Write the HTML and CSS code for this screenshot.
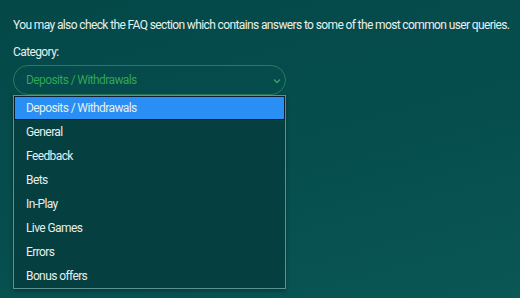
FILE: index.html
```html
<!DOCTYPE html>
<html>
<head>
    <title>FAQ</title>
    <link rel="stylesheet" href="styles.css">
</head>
<body>
    <div class="faq">
        <p class="intro">You may also check the FAQ section which contains answers to some of the most common user queries.</p>
        <label class="label">Category:</label>
        <div class="select">
            <div class="select-value">
                <span>Deposits / Withdrawals</span>
                <svg class="chevron" width="8" height="6" viewBox="0 0 8 6">
                    <path d="M1 1.5 L4 4.5 L7 1.5" fill="none" stroke="#3aa060" stroke-width="1.4"/>
                </svg>
            </div>
            <ul class="options">
                <li class="selected">Deposits / Withdrawals</li>
                <li>General</li>
                <li>Feedback</li>
                <li>Bets</li>
                <li>In-Play</li>
                <li>Live Games</li>
                <li>Errors</li>
                <li>Bonus offers</li>
            </ul>
        </div>
    </div>
</body>
</html>
```

FILE: styles.css
```css
body {
    margin: 0;
    height: 298px;
    background: linear-gradient(165deg, #044848 0%, #064e4e 55%, #0a5755 100%);
    font-family: Roboto, "Liberation Sans", sans-serif;
    color: #e8f0ee;
    overflow: hidden;
}

.faq {
    padding: 18px 13px 0;
}

.intro {
    margin: 0;
    font-size: 12px;
    line-height: 14px;
    letter-spacing: -0.62px;
    white-space: nowrap;
}

.label {
    display: block;
    margin-top: 13px;
    font-size: 12px;
    line-height: 14px;
    letter-spacing: -0.6px;
}

.select {
    width: 273px;
    margin-top: 6px;
}

.select-value {
    display: flex;
    justify-content: space-between;
    align-items: center;
    height: 28px;
    padding: 0 4px 0 12px;
    border: 1px solid #2c7a5e;
    border-radius: 15px;
    color: #2fa653;
    font-size: 12px;
    letter-spacing: -0.6px;
}

.chevron {
    margin-top: 1px;
}

.options {
    list-style: none;
    margin: 0;
    padding: 0;
    background: #053f40;
    border: 1px solid #5f9090;
    box-shadow: 0 2px 4px rgba(0, 0, 0, 0.3);
}

.options li {
    height: 24px;
    line-height: 24px;
    padding-left: 12px;
    font-size: 12px;
    letter-spacing: -0.6px;
    color: #e6eeec;
}

.options li.selected {
    height: 22px;
    line-height: 22px;
    padding-left: 11px;
    background: #2a8ff5;
    border: 1px solid #0d1e2e;
}
```
